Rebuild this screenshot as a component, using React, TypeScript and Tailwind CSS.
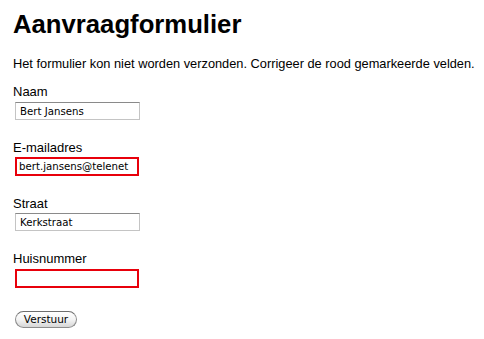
import React from "react";

const sans = { fontFamily: '"Liberation Sans", Arial, sans-serif' };
const lucida = { fontFamily: '"DejaVu Sans", Verdana, sans-serif' };

function Field({
  label,
  value,
  error,
  labelMt,
  inputMt,
}: {
  label: string;
  value: string;
  error?: boolean;
  labelMt: string;
  inputMt: string;
}) {
  return (
    <div>
      <div className={`${labelMt} text-[13px] leading-[16px] text-black`}>{label}</div>
      <input
        readOnly
        defaultValue={value}
        style={lucida}
        className={
          error
            ? `${inputMt} ml-[2px] block h-[19px] w-[124px] border-2 border-[#e8000b] bg-white px-[2px] text-[10.2px] text-black outline-none`
            : `${inputMt} ml-[2px] block h-[18px] w-[125px] border border-[#c4c4c4] border-t-[#8a8a8a] bg-white px-[4px] text-[10.2px] text-black outline-none`
        }
      />
    </div>
  );
}

export default function App() {
  return (
    <div className="h-[339px] w-[484px] bg-white pl-[13px]" style={sans}>
      <h1 className="pt-[9px] text-[25.7px] font-bold leading-[30px] text-black">Aanvraagformulier</h1>
      <p className="mt-[17px] whitespace-nowrap text-[12.8px] leading-[16px] text-black">
        Het formulier kon niet worden verzonden. Corrigeer de rood gemarkeerde velden.
      </p>
      <Field label="Naam" value="Bert Jansens" labelMt="mt-[12px]" inputMt="mt-[2px]" />
      <Field label="E-mailadres" value="bert.jansens@telenet" error labelMt="mt-[20px]" inputMt="mt-[1px]" />
      <Field label="Straat" value="Kerkstraat" labelMt="mt-[20px]" inputMt="mt-[1px]" />
      <Field label="Huisnummer" value="" error labelMt="mt-[20px]" inputMt="mt-[2px]" />
      <button
        type="button"
        style={lucida}
        className="ml-[2px] mt-[23px] flex h-[17px] w-[62px] items-center justify-center rounded-full border border-[#8c8c8c] border-t-[#6e6e6e] bg-gradient-to-b from-white via-[#f4f4f4] to-[#d6d6d6] text-[10.5px] leading-none text-black"
      >
        Verstuur
      </button>
    </div>
  );
}
